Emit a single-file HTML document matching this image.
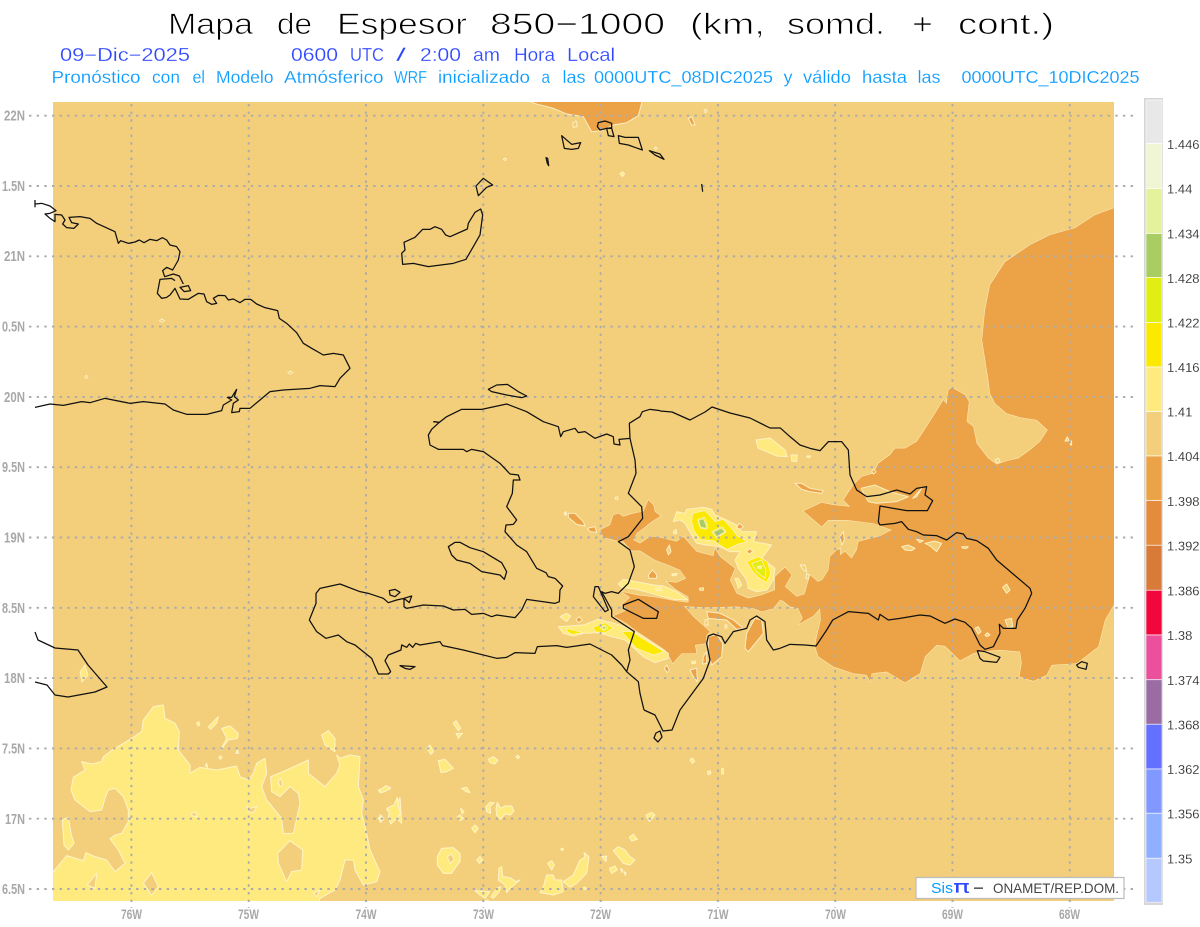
<!DOCTYPE html>
<html lang="es"><head><meta charset="utf-8"><title>Mapa de Espesor</title>
<style>
html,body{margin:0;padding:0;background:#fff}
svg{display:block}
polygon,polyline,path,line,rect{vector-effect:non-scaling-stroke}
text{font-family:"Liberation Sans",sans-serif;white-space:pre}
.c polygon,.c polyline{stroke-linejoin:round}
.k polyline,.k polygon{fill:none;stroke:#111;stroke-width:1.25;stroke-linejoin:round}
.ax{font-size:14.5px;font-weight:bold;fill:#a8a8a8}
.ab{font-size:13.5px;font-weight:bold;fill:#a8a8a8}
.lg{font-size:13px;fill:#222;stroke:#fff;stroke-width:.15}
</style></head><body>
<svg width="1200" height="927" viewBox="0 0 1200 927" xmlns="http://www.w3.org/2000/svg">
<defs>
<clipPath id="m"><rect x="53" y="102" width="1061" height="799"/></clipPath>
<g id="o">
<polygon transform="translate(540 480) scale(.33333)" points="220,408 262,390 245,375 270,352 245,335 290,345 350,352 400,362 445,368 445,350 410,330 380,305 410,308 438,295 420,270 385,255 345,240 300,212 275,212 250,185 230,182 190,172 180,150 210,135 220,105 235,100 250,110 280,100 310,95 325,60 340,75 345,95 362,108 335,125 310,145 290,160 280,180 300,190 330,170 350,170 410,185 430,170 470,215 520,228 525,205 540,230 585,265 570,300 590,340 625,355 665,345 705,330 705,290 735,262 755,285 735,320 770,350 800,340 805,310 835,305 865,290 880,240 900,205 900,330 830,385 790,420 770,375 720,360 700,385 665,395 640,385 590,380 500,382 445,380 432,378 460,410 510,455 500,465 498,490 465,495 470,520 425,520 398,550 385,525 375,510 285,450 260,430"/>
<polygon transform="translate(780 380) scale(.33333)" points="625,0 630,40 645,70 680,100 720,112 770,120 803,150 780,185 750,210 715,235 680,243 650,253 625,235 590,190 580,140 560,125 567,65 555,45 515,22 505,30 500,72 490,60 465,100 430,155 410,185 375,205 345,205 330,225 295,250 280,280 245,290 220,315 190,360 210,380 160,375 125,368 70,393 125,440 145,420 200,420 280,430 335,450 300,468 235,485 230,510 215,535 195,515 180,525 175,505 150,530 145,570 120,610 90,585 80,620 70,655 0,655 30,680 85,690 55,733 100,708 120,685 122,720 108,780 105,800 115,830 160,860 220,880 260,885 270,905 275,880 320,875 375,908 420,880 435,830 470,795 495,798 540,842 580,820 600,815 660,810 720,815 725,850 718,890 760,903 800,885 815,855 890,850 955,800 975,720 1010,660 1010,-519 945,-495 885,-456 810,-435 750,-405 675,-354 630,-285 615,-210 606,-120"/>
</g>
</defs>
<rect width="1200" height="927" fill="#fff"/>
<rect x="53" y="102" width="1061" height="799" fill="#f3cf7b"/>

<g clip-path="url(#m)">
<!-- SW yellow -->
<g class="c" transform="translate(0 690) scale(.33333)" fill="#ffea80" stroke="#fff4c8" stroke-width="1">
<polygon points="150,560 160,545 200,497 250,512 258,488 285,500 320,510 345,545 375,520 355,480 340,460 330,447 345,435 365,430 385,395 385,360 370,320 345,295 325,300 315,325 305,360 270,365 225,330 213,300 220,262 255,240 245,215 275,222 305,215 310,200 340,178 395,145 425,125 430,90 460,50 490,45 495,85 525,100 538,125 535,180 570,225 570,250 600,232 650,240 710,228 720,260 745,270 760,250 770,220 795,205 800,250 785,290 800,330 845,385 850,430 880,430 900,340 895,310 870,290 840,320 815,305 812,260 860,240 925,210 925,250 975,290 1010,250 1020,225 1010,195 1020,205 1050,195 1080,200 1075,290 1090,330 1085,370 1100,430 1110,480 1140,545 1130,575 1090,585 1065,540 1060,510 1035,510 1020,570 1005,600 960,625 955,640 150,640"/>
<g fill="#f3cf7b">
<polygon points="430,580 455,548 475,590 455,615"/><polygon points="262,585 290,550 285,595"/><polygon points="833,490 870,452 908,480 905,540 875,545 860,575 835,520"/><polygon points="940,610 960,600 950,620"/><polygon points="835,275 842,265 848,285 840,290"/><polygon points="572,372 585,365 592,380 578,378"/><polygon points="740,350 750,355 770,350 760,368 745,365"/>
</g>
<polygon points="187,390 205,382 213,430 222,460 205,480 192,465"/>
<polygon points="625,110 655,80 650,100 632,118"/>
<polygon points="665,115 690,108 715,130 712,145 685,150 662,180 680,145"/>
<polygon points="965,135 985,122 1005,145 1005,185 975,165"/>
<polygon points="1135,300 1165,290 1170,297 1140,308"/>
<polygon points="1160,360 1190,345 1200,322 1205,400 1180,375"/>
<polygon points="1135,385 1143,375 1152,387 1143,396"/>
<polygon points="708,190 712,178 716,190"/><polygon points="656,203 661,197 666,203 661,208"/><polygon points="616,228 620,220 623,232"/><polygon points="590,100 596,95 600,105 595,108"/>
</g>
<!-- lower middle yellow blobs -->
<g class="c" transform="translate(380 700) scale(.33333)" fill="#ffea80" stroke="#fff4c8" stroke-width="1">
<polygon points="220,70 228,62 242,85 235,92"/><polygon points="228,100 248,100 235,115"/><polygon points="140,145 150,135 160,155 153,163"/><polygon points="175,182 195,178 220,205 200,215 183,218"/><polygon points="325,178 340,170 353,180 345,192 330,188"/><polygon points="0,270 18,257 32,263 15,275 0,278"/><polygon points="245,265 260,262 270,278 258,275"/><polygon points="20,325 42,315 52,292 55,320 62,340 50,355 32,372 25,350 28,335"/><polygon points="0,345 10,355 0,367"/><polygon points="318,320 330,307 342,308 330,320 332,340 320,335"/><polygon points="348,325 352,307 362,325 375,318 395,318 402,332 392,345 375,342 362,358 350,345"/><polygon points="240,345 250,355 240,362 232,350"/><polygon points="242,325 252,335 246,342"/><polygon points="798,345 815,337 825,345 808,365"/><polygon points="275,385 285,375 295,385 285,398"/><polygon points="748,412 760,403 772,418 755,423"/><polygon points="172,470 185,445 220,443 240,460 240,485 228,500 215,520 190,520 172,495"/><polygon fill="#f3cf7b" points="202,470 215,462 222,480 210,490"/><polygon points="290,480 300,470 308,480 298,490"/><polygon points="700,452 715,440 735,450 750,470 765,480 750,495 730,490"/><polygon points="665,470 680,468 678,485"/><polygon points="688,505 705,498 712,510 695,520"/><polygon points="503,490 515,482 523,495 515,510"/><polygon points="550,545 580,525 600,480 615,472 612,458 627,470 620,520 590,550 570,562"/><polygon points="490,560 500,525 520,525 525,540 545,540 550,575 520,585 480,578"/><polygon points="357,505 365,500 368,530 390,533 408,545 420,540 390,565 380,578 375,555 355,540"/><polygon points="333,590 350,565 362,560 358,575 340,595"/><polygon points="285,572 330,575 315,595 300,585"/><polygon points="300,608 320,600 340,608"/><polygon points="930,180 937,174 944,183 937,190"/><polygon points="1025,205 1030,205 1030,222 1025,222"/><polygon points="982,215 990,212 993,220 985,224"/><polygon points="722,505 728,510 726,518"/><polygon points="732,515 738,518 736,526"/><polygon points="408,170 414,166 419,172 413,176"/><polygon points="542,447 547,444 551,449 546,452"/><polygon points="610,563 616,561 619,566 613,569"/>
</g>
<!-- orange top -->
<g class="c" transform="translate(380 100) scale(.33333)" fill="#eca347" stroke="#fff2c8" stroke-width=".9">
<polygon points="430,-10 437,0 470,12 520,25 560,42 610,50 635,95 665,92 700,75 740,68 775,47 790,-10"/>
<polygon fill="#f3cf7b" points="578,70 588,62 592,80 580,82"/>
<polygon points="925,55 935,50 945,75 935,75"/>
<polygon fill="#f3cf7b" points="972,30 978,27 982,33 976,39"/>
<polygon fill="#f3cf7b" points="370,178 375,174 380,178 375,182"/>
<polygon fill="#f3cf7b" points="822,145 827,141 832,145 827,149"/>
<polygon fill="#ffea80" points="720,222 727,215 734,222 727,230"/>
</g>
<!-- orange main (stroke pass + fill pass) -->
<g class="c" fill="#eca347" stroke="#fff2c8" stroke-width=".9"><use href="#o"/></g>
<g class="c" fill="#eca347" stroke="none"><use href="#o"/></g>
<!-- central details -->
<g class="c" transform="translate(540 480) scale(.33333)" stroke="#fff2c8" stroke-width=".9" fill="#eca347">
<polygon points="85,100 105,100 130,125 135,138 110,133 85,112"/>
<polygon points="142,145 165,140 170,157 150,155"/>
<polygon points="108,418 118,410 127,420 115,428"/>
<polygon points="325,285 338,270 350,285 350,295 327,295"/>
<polygon points="380,555 388,570 382,578 373,565"/>
<polygon points="450,570 470,565 472,605 460,590"/>
<polygon points="500,395 540,400 580,420 610,445 590,448 560,420 505,415"/>
<polygon points="620,460 645,415 665,420 670,460 625,515 615,505"/>
<polygon points="505,470 530,463 548,490 545,530 515,555 505,520"/>
<polygon points="490,530 500,515 500,550 488,552"/>
<g fill="#f3cf7b">
<polygon points="380,210 388,195 393,215 385,225"/>
<polygon points="478,325 490,323 490,331 480,331"/>
<polygon points="495,420 503,418 505,435 495,436"/>
<polygon points="225,52 232,50 234,58 226,58"/>
<polygon points="555,435 561,435 560,445 555,444"/>
</g>
<g fill="#ffea80">
<!-- NE lobe -->
<polygon points="400,125 410,95 435,100 440,88 490,82 515,88 525,105 560,120 590,135 605,155 650,155 640,185 670,190 695,195 665,235 705,265 700,300 680,330 650,335 625,325 620,300 595,265 585,240 600,215 570,215 540,200 500,195 470,190 455,165 435,130 420,120"/>
<polygon points="585,295 595,295 605,315 595,325"/>
<polygon points="400,155 408,148 410,160 402,162"/>
<!-- strip -->
<polygon points="235,312 250,298 290,305 340,315 370,318 410,335 445,360 400,358 350,345 290,328 245,322"/>
<polygon points="395,282 412,280 408,287 397,287"/>
<polygon points="455,545 466,543 466,550 456,551"/>
<!-- lower -->
<polygon points="55,440 130,435 175,418 215,428 240,435 285,455 340,490 385,520 385,535 345,548 310,530 255,480 215,470 175,458 130,460 100,468 70,460"/>
<polygon points="60,410 80,400 92,408 80,425"/>
<polygon points="72,98 78,95 80,105 74,105"/>
</g>
<polygon fill="#eca347" points="630,205 638,215 628,222 620,215"/>
<polygon fill="#eca347" points="598,130 610,140 600,148 590,142"/>
<g fill="#fbe900" stroke-width=".7">
<polygon points="458,100 495,92 508,105 525,125 550,118 572,142 592,168 622,185 595,192 560,208 520,182 480,178 462,152 455,125"/>
<polygon points="620,245 655,230 682,245 692,280 680,308 655,292 638,275"/>
<polygon points="665,315 672,322 665,325 662,320"/>
<polygon points="80,445 130,458 95,463 82,455"/>
<polygon points="160,442 195,428 220,445 195,458 165,455"/>
<polygon points="245,455 275,455 372,515 340,525 290,505"/>
<polygon fill="#ffef9a" points="345,325 360,322 367,332 350,333"/>
</g>
<g fill="#e1ee14" stroke-width=".7">
<polygon points="473,118 494,112 504,142 498,148 480,144"/>
<polygon points="515,155 545,140 558,155 530,175"/>
<polygon points="635,250 665,240 678,270 675,295 650,275"/>
<polygon points="180,442 195,435 205,445 190,452"/>
</g>
<g fill="#a9cd62" stroke-width=".7">
<polygon points="476,121 490,116 500,140 495,145 481,140"/>
<polygon points="520,155 545,145 555,155 530,170"/>
<polygon points="186,441 193,438 198,444 190,448"/>
</g>
<polygon fill="#fff0a0" stroke="none" points="650,258 668,256 664,268 652,266"/>
</g>
<!-- east holes -->
<g class="c" transform="translate(780 380) scale(.33333)" fill="#f3cf7b" stroke="#fff2c8" stroke-width=".9">
<polygon points="243,325 285,315 330,335 385,350 350,365 290,370 265,365"/>
<polygon points="398,355 425,325 410,350"/>
<polygon points="365,500 385,495 405,505 395,512 375,510"/>
<polygon points="410,478 430,482 420,488"/>
<polygon points="435,490 465,483 485,490 470,515 450,498"/>
<polygon points="545,500 565,500 560,505 548,505"/>
<polygon points="668,622 680,612 690,630 680,640"/>
<polygon points="675,720 695,715 698,740 685,745"/>
<polygon points="585,745 595,740 603,755 595,762"/>
<polygon points="615,765 622,758 630,765 620,770"/>
<polygon points="60,555 75,555 80,575 70,570"/>
<polygon points="80,580 88,585 85,598 78,595"/>
<polygon points="855,183 868,183 862,170"/>
<polygon points="870,183 875,183 875,195 871,195"/>
<polygon points="645,240 655,235 660,245 650,248"/>
<polygon fill="#eca347" points="45,310 65,310 90,325 130,332 125,340 90,335 65,328"/>
<polygon fill="#eca347" points="180,470 190,455 193,480 185,495"/>
<polygon fill="#eca347" points="275,275 281,268 288,275 281,282"/>
<g fill="#ffea80">
<polygon points="-72,180 -30,174 15,210 22,230 -10,228 -66,204"/>
<polygon points="33,225 52,225 50,245 35,243"/>
<polygon points="80,228 92,228 88,233 82,232"/>
</g>
</g>
<!-- small spots NW -->
<g class="c" transform="translate(0 180) scale(.33333)" fill="#f3cf7b" stroke="#fff2c8" stroke-width=".8">
<polygon points="478,422 486,417 494,422 486,427"/><polygon points="254,590 259,586 264,590 259,596"/><polygon points="863,578 871,573 879,578 871,583"/>
</g>
<polygon points="80,672 85,665 88,675 82,682" fill="#ffea80" stroke="#fff4c8" stroke-width=".8"/>
</g>

<!-- grid -->
<g stroke="#ababab" stroke-width="1.9" stroke-dasharray="2.4 5.25" fill="none">
<line x1="29" x2="1134" y1="115.7" y2="115.7"/><line x1="29" x2="1134" y1="186" y2="186"/><line x1="29" x2="1134" y1="256.3" y2="256.3"/><line x1="29" x2="1134" y1="326.6" y2="326.6"/><line x1="29" x2="1134" y1="396.9" y2="396.9"/><line x1="29" x2="1134" y1="467.2" y2="467.2"/><line x1="29" x2="1134" y1="537.5" y2="537.5"/><line x1="29" x2="1134" y1="607.8" y2="607.8"/><line x1="29" x2="1134" y1="678.1" y2="678.1"/><line x1="29" x2="1134" y1="748.4" y2="748.4"/><line x1="29" x2="1134" y1="818.7" y2="818.7"/><line x1="29" x2="1134" y1="889" y2="889"/>
<line y1="104" y2="908" x1="131.4" x2="131.4"/><line y1="104" y2="908" x1="248.7" x2="248.7"/><line y1="104" y2="908" x1="366" x2="366"/><line y1="104" y2="908" x1="483.3" x2="483.3"/><line y1="104" y2="908" x1="600.6" x2="600.6"/><line y1="104" y2="908" x1="717.9" x2="717.9"/><line y1="104" y2="908" x1="835.2" x2="835.2"/><line y1="104" y2="908" x1="952.5" x2="952.5"/><line y1="104" y2="908" x1="1069.8" x2="1069.8"/>
</g>

<!-- coasts -->
<g class="k">
<g transform="translate(0 180) scale(.33333)">
<polyline points="105,60 105,82"/>
<polyline points="105,72 125,70 150,78 168,92 150,100 135,102 150,115 165,125 165,103 185,105 195,120 188,132 200,143 222,145 235,132 215,128 207,112 240,110 270,115 290,130 345,155 355,190 362,182 385,190 405,186 418,180 432,188 450,178 470,182 487,173 500,180 510,195 530,200 540,215 535,240 518,270 500,262 488,272 494,290 520,282 538,288 550,312"/>
<polyline points="525,302 515,295 480,298 472,340 485,355 500,352 510,345 525,325 540,357 565,358 595,340 612,342 620,365 635,373 650,370 640,355 655,346 675,347 685,360 700,357 720,368 735,358 752,358 770,372 795,383 833,392 838,415 860,430 890,458 910,490 935,505 970,525 1000,520 1030,525 1050,565 1020,595 1005,620 960,617 930,625 850,630 810,635 780,660 750,685 720,685 718,695 695,698 700,670 715,660 703,650 710,628 695,652 682,652 695,660 670,675 665,692 620,703 560,703 520,690 495,672 430,665 390,670 315,655 270,668 245,665 190,676 150,672 105,682"/>
<polygon points="540,322 565,317 572,332 553,335"/>
</g>
<polyline points="35,632 38,640 55,648 78,650 88,665 107,687 95,692 68,697 55,695 47,685 35,682"/>
<g transform="translate(380 100) scale(.33333)">
<polygon points="655,68 675,63 695,70 695,83 680,85 660,90 652,80"/>
<polygon points="680,85 695,85 702,110 685,107"/>
<polygon points="545,107 575,133 602,128 595,145 575,148 553,145"/>
<polygon points="715,107 735,112 775,112 787,150 745,135 718,130"/>
<polygon points="808,152 840,162 852,178 825,165"/>
<polygon points="498,173 503,175 506,197 502,190"/>
<polyline points="965,252 968,275"/>
<polygon points="288,258 310,235 338,255 320,262 295,287"/>
<polygon points="65,460 75,450 72,427 105,412 128,388 150,388 165,380 185,388 197,405 210,410 262,387 265,370 285,337 302,327 308,345 300,405 258,478 220,490 145,500 100,490 68,493"/>
</g>
<g transform="translate(300 380) scale(.33333)">
<polyline points="400,125 418,127 440,110 485,88 520,88 545,88 620,72 680,95 730,125 775,140 782,170 790,155 825,145 835,158 855,155 885,175 920,162 940,170 942,192 960,195 957,178 990,175"/>
<polyline points="400,125 418,127 395,148 385,165 390,195 415,208 490,208 500,215 515,208 550,215 600,250 630,282 655,285 660,300 640,300 637,340 620,380 650,420 640,433 618,435 615,455 650,495 680,515 710,565 738,578 745,590 765,595 788,618 780,630 778,665 765,670 680,658 665,690 645,713 590,705 575,710 550,700 515,703 495,688 460,690 430,678 370,675 320,685 312,680 312,655 335,648 328,668 312,655 290,660 265,668 250,655 205,640 180,635 120,612 60,625 48,640 48,670 28,720 50,755 78,775 115,765 140,785 165,795 215,835 235,882 265,882 272,875 255,842 265,825 303,810 305,795 320,802 328,792 338,802 347,790 360,795 420,785 428,797 490,810 590,835 620,832 645,818 705,820 712,800 770,797 800,802 870,792 935,825 965,855 980,875 1015,905 1020,940 1032,990"/>
<polyline points="1080,92 1050,88 1027,95 1020,110 988,130 990,175 1005,240 1008,280 985,340 1025,380 1028,415 985,470 955,485 990,510 1003,560 985,610 955,640 935,635 915,640 905,635 935,690 935,710 1003,755 985,810 990,840 980,875"/>
<polygon points="885,620 895,620 925,690 915,695 880,650"/>
<polygon points="445,500 465,487 480,487 510,503 550,515 605,548 620,575 613,598 600,585 545,575 510,550 470,540 455,525"/>
<polygon points="565,28 590,15 622,13 655,35 680,48 665,53 620,45 575,35"/>
<polygon points="268,632 285,628 300,637 285,650 270,645"/>
<polygon points="300,857 345,860 330,868 315,865"/>
</g>
<polyline points="660,411 672,412 690,420 705,412 712,407 730,413 750,418 770,428 780,428"/>
<g transform="translate(780 380) scale(.33333)">
<polyline points="0,143 30,170 60,195 90,205 120,212 145,185 185,185 205,210 210,285 230,330 260,350 300,345 350,330 390,342 410,325 440,320 435,345 458,362 442,392 380,392 300,378 295,425 300,435 345,430 365,425 385,448 410,455 430,465 470,467 500,480 530,458 550,462 560,475 590,482 625,505 650,540 750,625 755,640 735,685 712,720 708,745 670,745 658,733 660,760 640,800 615,808 600,795 575,745 555,727 525,717 495,730 450,708 420,705 360,715 325,720 300,703 295,720 265,700 205,695 158,720 140,750 108,798 75,795 30,793 0,805"/>
<polygon points="592,812 615,815 660,832 650,847 610,843 600,835"/>
<polygon points="890,855 905,845 922,850 918,868 895,862"/>
</g>
<g transform="translate(540 480) scale(.33333)">
<polyline points="720,505 700,510 680,480 675,425 650,408 630,420 620,445 580,455 555,490 545,470 520,462 505,468 500,490 510,540 490,595 420,690"/>
<polygon points="250,375 295,358 355,395 350,415 310,415 270,395 250,385"/>
</g>
<polyline points="644,710 655,715 663,731 672,730 680,710"/>
<polygon points="656,733 660,731 662,737 658,742 654,738"/>
</g>

<!-- axis labels -->
<g class="ax">
<text x="4" y="120.5" textLength="21" lengthAdjust="spacingAndGlyphs">22N</text>
<text x="2" y="191" textLength="23" lengthAdjust="spacingAndGlyphs">1.5N</text>
<text x="4" y="261" textLength="21" lengthAdjust="spacingAndGlyphs">21N</text>
<text x="2" y="331.5" textLength="23" lengthAdjust="spacingAndGlyphs">0.5N</text>
<text x="4" y="402" textLength="21" lengthAdjust="spacingAndGlyphs">20N</text>
<text x="2" y="472" textLength="23" lengthAdjust="spacingAndGlyphs">9.5N</text>
<text x="4" y="542.5" textLength="21" lengthAdjust="spacingAndGlyphs">19N</text>
<text x="2" y="613" textLength="23" lengthAdjust="spacingAndGlyphs">8.5N</text>
<text x="4" y="683" textLength="21" lengthAdjust="spacingAndGlyphs">18N</text>
<text x="2" y="753.5" textLength="23" lengthAdjust="spacingAndGlyphs">7.5N</text>
<text x="5" y="824" textLength="20" lengthAdjust="spacingAndGlyphs">17N</text>
<text x="2" y="894" textLength="23" lengthAdjust="spacingAndGlyphs">6.5N</text>
</g>
<g class="ab">
<text x="121" y="919" textLength="21" lengthAdjust="spacingAndGlyphs">76W</text>
<text x="238" y="919" textLength="21" lengthAdjust="spacingAndGlyphs">75W</text>
<text x="355.5" y="919" textLength="21" lengthAdjust="spacingAndGlyphs">74W</text>
<text x="473" y="919" textLength="21" lengthAdjust="spacingAndGlyphs">73W</text>
<text x="590" y="919" textLength="21" lengthAdjust="spacingAndGlyphs">72W</text>
<text x="707.5" y="919" textLength="21" lengthAdjust="spacingAndGlyphs">71W</text>
<text x="825" y="919" textLength="21" lengthAdjust="spacingAndGlyphs">70W</text>
<text x="942" y="919" textLength="21" lengthAdjust="spacingAndGlyphs">69W</text>
<text x="1059" y="919" textLength="21" lengthAdjust="spacingAndGlyphs">68W</text>
</g>

<!-- headings -->
<g font-size="30" fill="#000" stroke="#fff" stroke-width=".8">
<text x="168" y="34" textLength="85" lengthAdjust="spacingAndGlyphs">Mapa</text>
<text x="277" y="34" textLength="35" lengthAdjust="spacingAndGlyphs">de</text>
<text x="337" y="34" textLength="130" lengthAdjust="spacingAndGlyphs">Espesor</text>
<text x="490" y="34" textLength="175" lengthAdjust="spacingAndGlyphs">850−1000</text>
<text x="690" y="34" textLength="75" lengthAdjust="spacingAndGlyphs">(km,</text>
<text x="787" y="34" textLength="98" lengthAdjust="spacingAndGlyphs">somd.</text>
<text x="912" y="34" textLength="21" lengthAdjust="spacingAndGlyphs">+</text>
<text x="958" y="34" textLength="96" lengthAdjust="spacingAndGlyphs">cont.)</text>
</g>
<g font-size="18" fill="#2f48ff" stroke="#fff" stroke-width=".2">
<text x="60" y="61" textLength="130" lengthAdjust="spacingAndGlyphs">09−Dic−2025</text>
<text x="291" y="61" textLength="47" lengthAdjust="spacingAndGlyphs">0600</text>
<text x="350" y="61" textLength="34" lengthAdjust="spacingAndGlyphs">UTC</text>
<text x="396" y="61" textLength="10" lengthAdjust="spacingAndGlyphs">/</text>
<text x="420" y="61" textLength="41" lengthAdjust="spacingAndGlyphs">2:00</text>
<text x="473" y="61" textLength="27" lengthAdjust="spacingAndGlyphs">am</text>
<text x="514" y="61" textLength="41" lengthAdjust="spacingAndGlyphs">Hora</text>
<text x="567" y="61" textLength="48" lengthAdjust="spacingAndGlyphs">Local</text>
</g>
<g font-size="17.5" fill="#0a9cff" stroke="#fff" stroke-width=".15">
<text x="51.5" y="83" textLength="89" lengthAdjust="spacingAndGlyphs">Pronóstico</text>
<text x="152" y="83" textLength="28" lengthAdjust="spacingAndGlyphs">con</text>
<text x="192.5" y="83" textLength="12.5" lengthAdjust="spacingAndGlyphs">el</text>
<text x="216" y="83" textLength="57.5" lengthAdjust="spacingAndGlyphs">Modelo</text>
<text x="284" y="83" textLength="99.5" lengthAdjust="spacingAndGlyphs">Atmósferico</text>
<text x="394" y="83" textLength="33" lengthAdjust="spacingAndGlyphs">WRF</text>
<text x="438" y="83" textLength="92" lengthAdjust="spacingAndGlyphs">inicializado</text>
<text x="541.5" y="83" textLength="8.5" lengthAdjust="spacingAndGlyphs">a</text>
<text x="562.5" y="83" textLength="23" lengthAdjust="spacingAndGlyphs">las</text>
<text x="594" y="83" textLength="179" lengthAdjust="spacingAndGlyphs">0000UTC_08DIC2025</text>
<text x="783.5" y="83" textLength="9" lengthAdjust="spacingAndGlyphs">y</text>
<text x="803" y="83" textLength="48" lengthAdjust="spacingAndGlyphs">válido</text>
<text x="862" y="83" textLength="45" lengthAdjust="spacingAndGlyphs">hasta</text>
<text x="917.5" y="83" textLength="23" lengthAdjust="spacingAndGlyphs">las</text>
<text x="961.5" y="83" textLength="178" lengthAdjust="spacingAndGlyphs">0000UTC_10DIC2025</text>
</g>

<!-- legend -->
<rect x="1144" y="98" width="19" height="807" fill="#d6d6d6"/>
<g stroke="#fff" stroke-opacity=".65" stroke-width=".9">
<rect x="1146" y="100" width="16" height="43.5" fill="#e8e8e8"/>
<rect x="1146" y="143.5" width="16" height="45" fill="#f0f5d3"/>
<rect x="1146" y="188.5" width="16" height="45" fill="#e4f29d"/>
<rect x="1146" y="233.5" width="16" height="44" fill="#a9cd62"/>
<rect x="1146" y="277.5" width="16" height="45" fill="#e1ee14"/>
<rect x="1146" y="322.5" width="16" height="44.5" fill="#fbe900"/>
<rect x="1146" y="367" width="16" height="44.5" fill="#ffea80"/>
<rect x="1146" y="411.5" width="16" height="44.5" fill="#f3cf7b"/>
<rect x="1146" y="456" width="16" height="44.5" fill="#eca347"/>
<rect x="1146" y="500.5" width="16" height="44.8" fill="#e58b3c"/>
<rect x="1146" y="545.3" width="16" height="45" fill="#d87a38"/>
<rect x="1146" y="590.3" width="16" height="44.7" fill="#f2073c"/>
<rect x="1146" y="635" width="16" height="44.7" fill="#ea509c"/>
<rect x="1146" y="679.7" width="16" height="44.6" fill="#9b6ca4"/>
<rect x="1146" y="724.3" width="16" height="44.7" fill="#6470ff"/>
<rect x="1146" y="769" width="16" height="44.3" fill="#8098ff"/>
<rect x="1146" y="813.3" width="16" height="45" fill="#90b0ff"/>
<rect x="1146" y="858.3" width="16" height="44" fill="#b5c8ff"/>
</g>
<g class="lg">
<text x="1167" y="149">1.446</text><text x="1167" y="193.5">1.44</text><text x="1167" y="238.5">1.434</text><text x="1167" y="283">1.428</text><text x="1167" y="327.5">1.422</text><text x="1167" y="372">1.416</text><text x="1167" y="416.5">1.41</text><text x="1167" y="461">1.404</text><text x="1167" y="506">1.398</text><text x="1167" y="550.5">1.392</text><text x="1167" y="595.5">1.386</text><text x="1167" y="640">1.38</text><text x="1167" y="685">1.374</text><text x="1167" y="729.5">1.368</text><text x="1167" y="774">1.362</text><text x="1167" y="818.5">1.356</text><text x="1167" y="863.5">1.35</text>
</g>

<!-- credit box -->
<rect x="916" y="877.5" width="208" height="21" fill="#fff" stroke="#bcbcbc" stroke-width="1.2"/>
<text x="931" y="893" font-size="14.5" fill="#0a9cff" textLength="22" lengthAdjust="spacingAndGlyphs">Sis</text>
<text x="953" y="893" font-size="18" fill="#2f48ff" textLength="17" lengthAdjust="spacingAndGlyphs" style="font-family:'DejaVu Sans',sans-serif">π</text>
<rect x="974" y="887.5" width="9" height="1.3" fill="#333"/>
<text x="993" y="893" font-size="14" fill="#444" textLength="126" lengthAdjust="spacingAndGlyphs">ONAMET/REP.DOM.</text>
</svg>
</body></html>
